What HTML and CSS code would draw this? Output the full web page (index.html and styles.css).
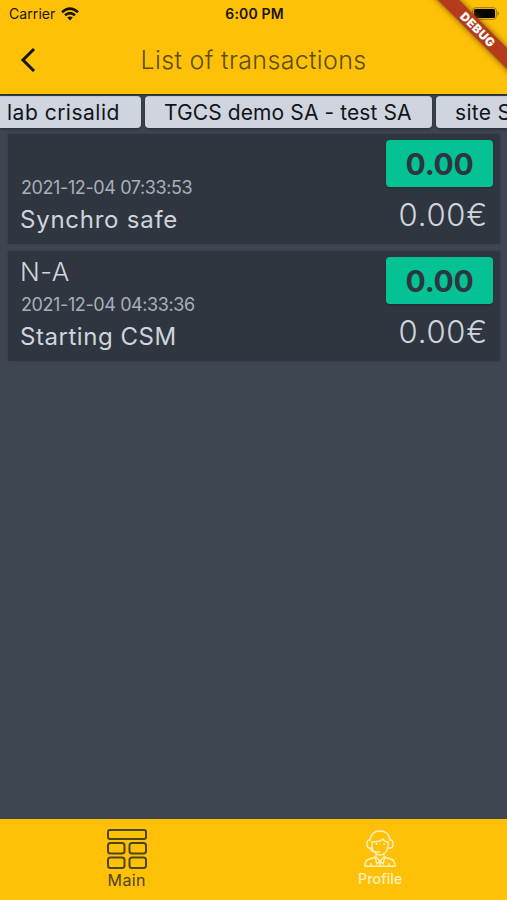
FILE: index.html
```html
<!DOCTYPE html>
<html lang="en">
<head>
<meta charset="utf-8">
<title>List of transactions</title>
<link rel="stylesheet" href="styles.css">
</head>
<body>
<div class="app">
  <header class="header">
    <div class="status">
      <div class="carrier"><span>Carrier</span>
        <svg class="wifi" width="18" height="14" viewBox="0 0 18 14" fill="none" stroke="#191500" stroke-width="2.5"><path d="M1 5.2Q9-2 17 5.2M4 8.3q5-4.3 10 0"/><path d="M6.2 10.6q2.8-2.4 5.6 0L9 13.5z" fill="#191500" stroke="none"/></svg>
      </div>
      <time class="clock">6:00 PM</time>
      <svg class="battery" width="28" height="13" viewBox="0 0 28 13"><rect x=".7" y=".7" width="23.6" height="11.6" rx="3" fill="none" stroke="#9a7810"/><rect x="2" y="2" width="21" height="9" rx="1.5" fill="#050500"/><path d="M25.500 4q3 2.500 0 5z" fill="#9a7810"/></svg>
    </div>
    <div class="titlebar">
      <svg class="back" width="16" height="26" viewBox="0 0 16 26" fill="none" stroke="#171400" stroke-width="3"><path d="M14 2 3 13l11 11"/></svg>
      <h1>List of transactions</h1>
    </div>
    <div class="debug"><span>DEBUG</span></div>
  </header>
  <nav class="chips">
    <span class="chip chip-lab"><b>lab crisalid</b></span>
    <span class="chip chip-demo"><b>TGCS demo SA - test SA</b></span>
    <span class="chip chip-site"><b>site SA</b></span>
  </nav>
  <main class="list">
    <article class="card">
      <div class="info"><p class="ref"></p><p class="date">2021-12-04 07:33:53</p><p class="name">Synchro safe</p></div>
      <div class="amounts"><strong class="badge">0.00</strong><span class="price">0.00€</span></div>
    </article>
    <article class="card">
      <div class="info"><p class="ref">N-A</p><p class="date">2021-12-04 04:33:36</p><p class="name name-second">Starting CSM</p></div>
      <div class="amounts"><strong class="badge">0.00</strong><span class="price">0.00€</span></div>
    </article>
  </main>
  <footer class="tabs">
    <div class="tab">
      <svg width="42" height="42" viewBox="0 0 42 42" fill="none" stroke="#4b4619" stroke-width="2"><rect x="2" y="2" width="38" height="9" rx="2"/><rect x="2" y="15" width="16.500" height="10.500" rx="2.500"/><rect x="23.500" y="15" width="16.500" height="10.500" rx="2.500"/><rect x="2" y="29.500" width="16.500" height="10.500" rx="2.500"/><rect x="23.500" y="29.500" width="16.500" height="10.500" rx="2.500"/></svg>
      <span class="main-label">Main</span>
    </div>
    <div class="tab profile">
      <svg width="34" height="38" viewBox="0 0 34 38" fill="none" stroke="#fff0bd" stroke-width="1.400"><path d="M7 10C8 4 11 1 17 1s9 3 10 9M9 12c5 0 9-1 11-3 1 2 3 3 5 3v4c0 5-4 9-8 9s-8-4-8-9zM8 10H6.500Q4 10 4 14t2.500 4H9M26 10h1.500Q30 10 30 14t-2.500 4H25M7 18q1 4 7 4h3M13.500 13v2M21 13v2M13 24v3l-8 2.500Q2 31 2 36.300h30Q32 31 29 29.500L21 27v-3M13 27l4 4 4-4M12 27l2 7 3-3 3 3 2-7M17 31v5M8 33v3M26 33v3"/></svg>
      <span>Profile</span>
    </div>
  </footer>
</div>
</body>
</html>
```
FILE: styles.css
```css
* { box-sizing: border-box; }
body { margin: 0; background: #3e4651; font-family: Inter, "Liberation Sans", sans-serif; }
h1, p { margin: 0; font-weight: 400; }
svg { display: block; flex-shrink: 0; }
.app { width: 507px; height: 900px; display: flex; flex-direction: column; overflow: hidden; background: #3e4651; }
.header { position: relative; height: 94px; flex-shrink: 0; background: #ffc108; overflow: hidden; color: #191500; box-shadow: 0 1px 2px #252a27; }
.status { height: 27px; padding: 0 7px 0 9px; display: grid; grid-template-columns: 1fr auto 1fr; align-items: center; }
.carrier { display: flex; align-items: center; gap: 6px; font-size: 14px; letter-spacing: .08px; }
.clock { font-size: 14px; font-weight: 600; letter-spacing: .15px; }
.battery { justify-self: end; }
.titlebar { height: 65px; display: grid; grid-template-columns: 20px 1fr 20px; padding: 0 20px; align-items: center; }
h1 { text-align: center; color: #5b4e0b; font-size: 25px; line-height: 36px; font-weight: 300; letter-spacing: .35px; white-space: nowrap; }
.debug { position: absolute; left: 422px; top: 22px; width: 112px; height: 15px; background: #b43b1b; color: #fff; transform: rotate(45deg); display: flex; justify-content: center; align-items: center; font-size: 12px; font-weight: 900; letter-spacing: .4px; box-shadow: 0 0 6px #76500b; }
.chips { display: flex; gap: 4px; padding-top: 2px; height: 40px; flex-shrink: 0; overflow: hidden; }
.chip { height: 32px; flex-shrink: 0; border-radius: 4px; background: #cfd4de; color: #111419; display: flex; align-items: center; box-shadow: 0 1px 3px #242a31; white-space: nowrap; font-size: 21px; }
.chip b { font-weight: 400; }
.chip-lab { width: 141px; padding-left: 7px; border-radius: 0 4px 4px 0; letter-spacing: .5px; }
.chip-demo { width: 287px; padding-left: 19px; letter-spacing: .1px; }
.chip-site { width: 110px; padding-left: 19px; letter-spacing: .3px; }
.list { flex: 1; padding: 0 7px 0 8px; display: flex; flex-direction: column; gap: 7px; }
.card { height: 110px; display: flex; justify-content: space-between; padding: 6px 7px 0 12px; background: #30363f; color: #cfd4de; box-shadow: 0 0 2px #343a43; }
.ref { height: 31px; font-size: 26px; line-height: 29px; font-weight: 300; letter-spacing: .6px; }
.date { height: 33px; font-size: 18px; line-height: 33px; color: #a9afb9; white-space: nowrap; letter-spacing: -.4px; padding-left: 1px; }
.name { font-size: 24px; line-height: 32px; white-space: nowrap; letter-spacing: .75px; }
.name-second { letter-spacing: .55px; }
.amounts { width: 107px; display: flex; flex-direction: column; align-items: flex-end; }
.badge { width: 107px; height: 47px; border-radius: 4px; background: #04c294; color: #2c3540; display: flex; align-items: center; justify-content: center; font-size: 30px; font-weight: 700; letter-spacing: -.3px; box-shadow: 0 1px 2px #242a31; }
.price { font-size: 31px; font-weight: 350; line-height: 38px; margin: 9px 5px 0 0; white-space: nowrap; letter-spacing: .8px; }
.tabs { height: 81px; display: flex; background: #ffc108; }
.tab { flex: 1; display: flex; flex-direction: column; align-items: center; padding-top: 9px; color: #4b4619; font-size: 16px; line-height: 21px; }
.main-label { letter-spacing: .4px; }
.profile { color: #fff0bd; font-size: 14px; font-weight: 500; padding-top: 11px; letter-spacing: .15px; }
```
